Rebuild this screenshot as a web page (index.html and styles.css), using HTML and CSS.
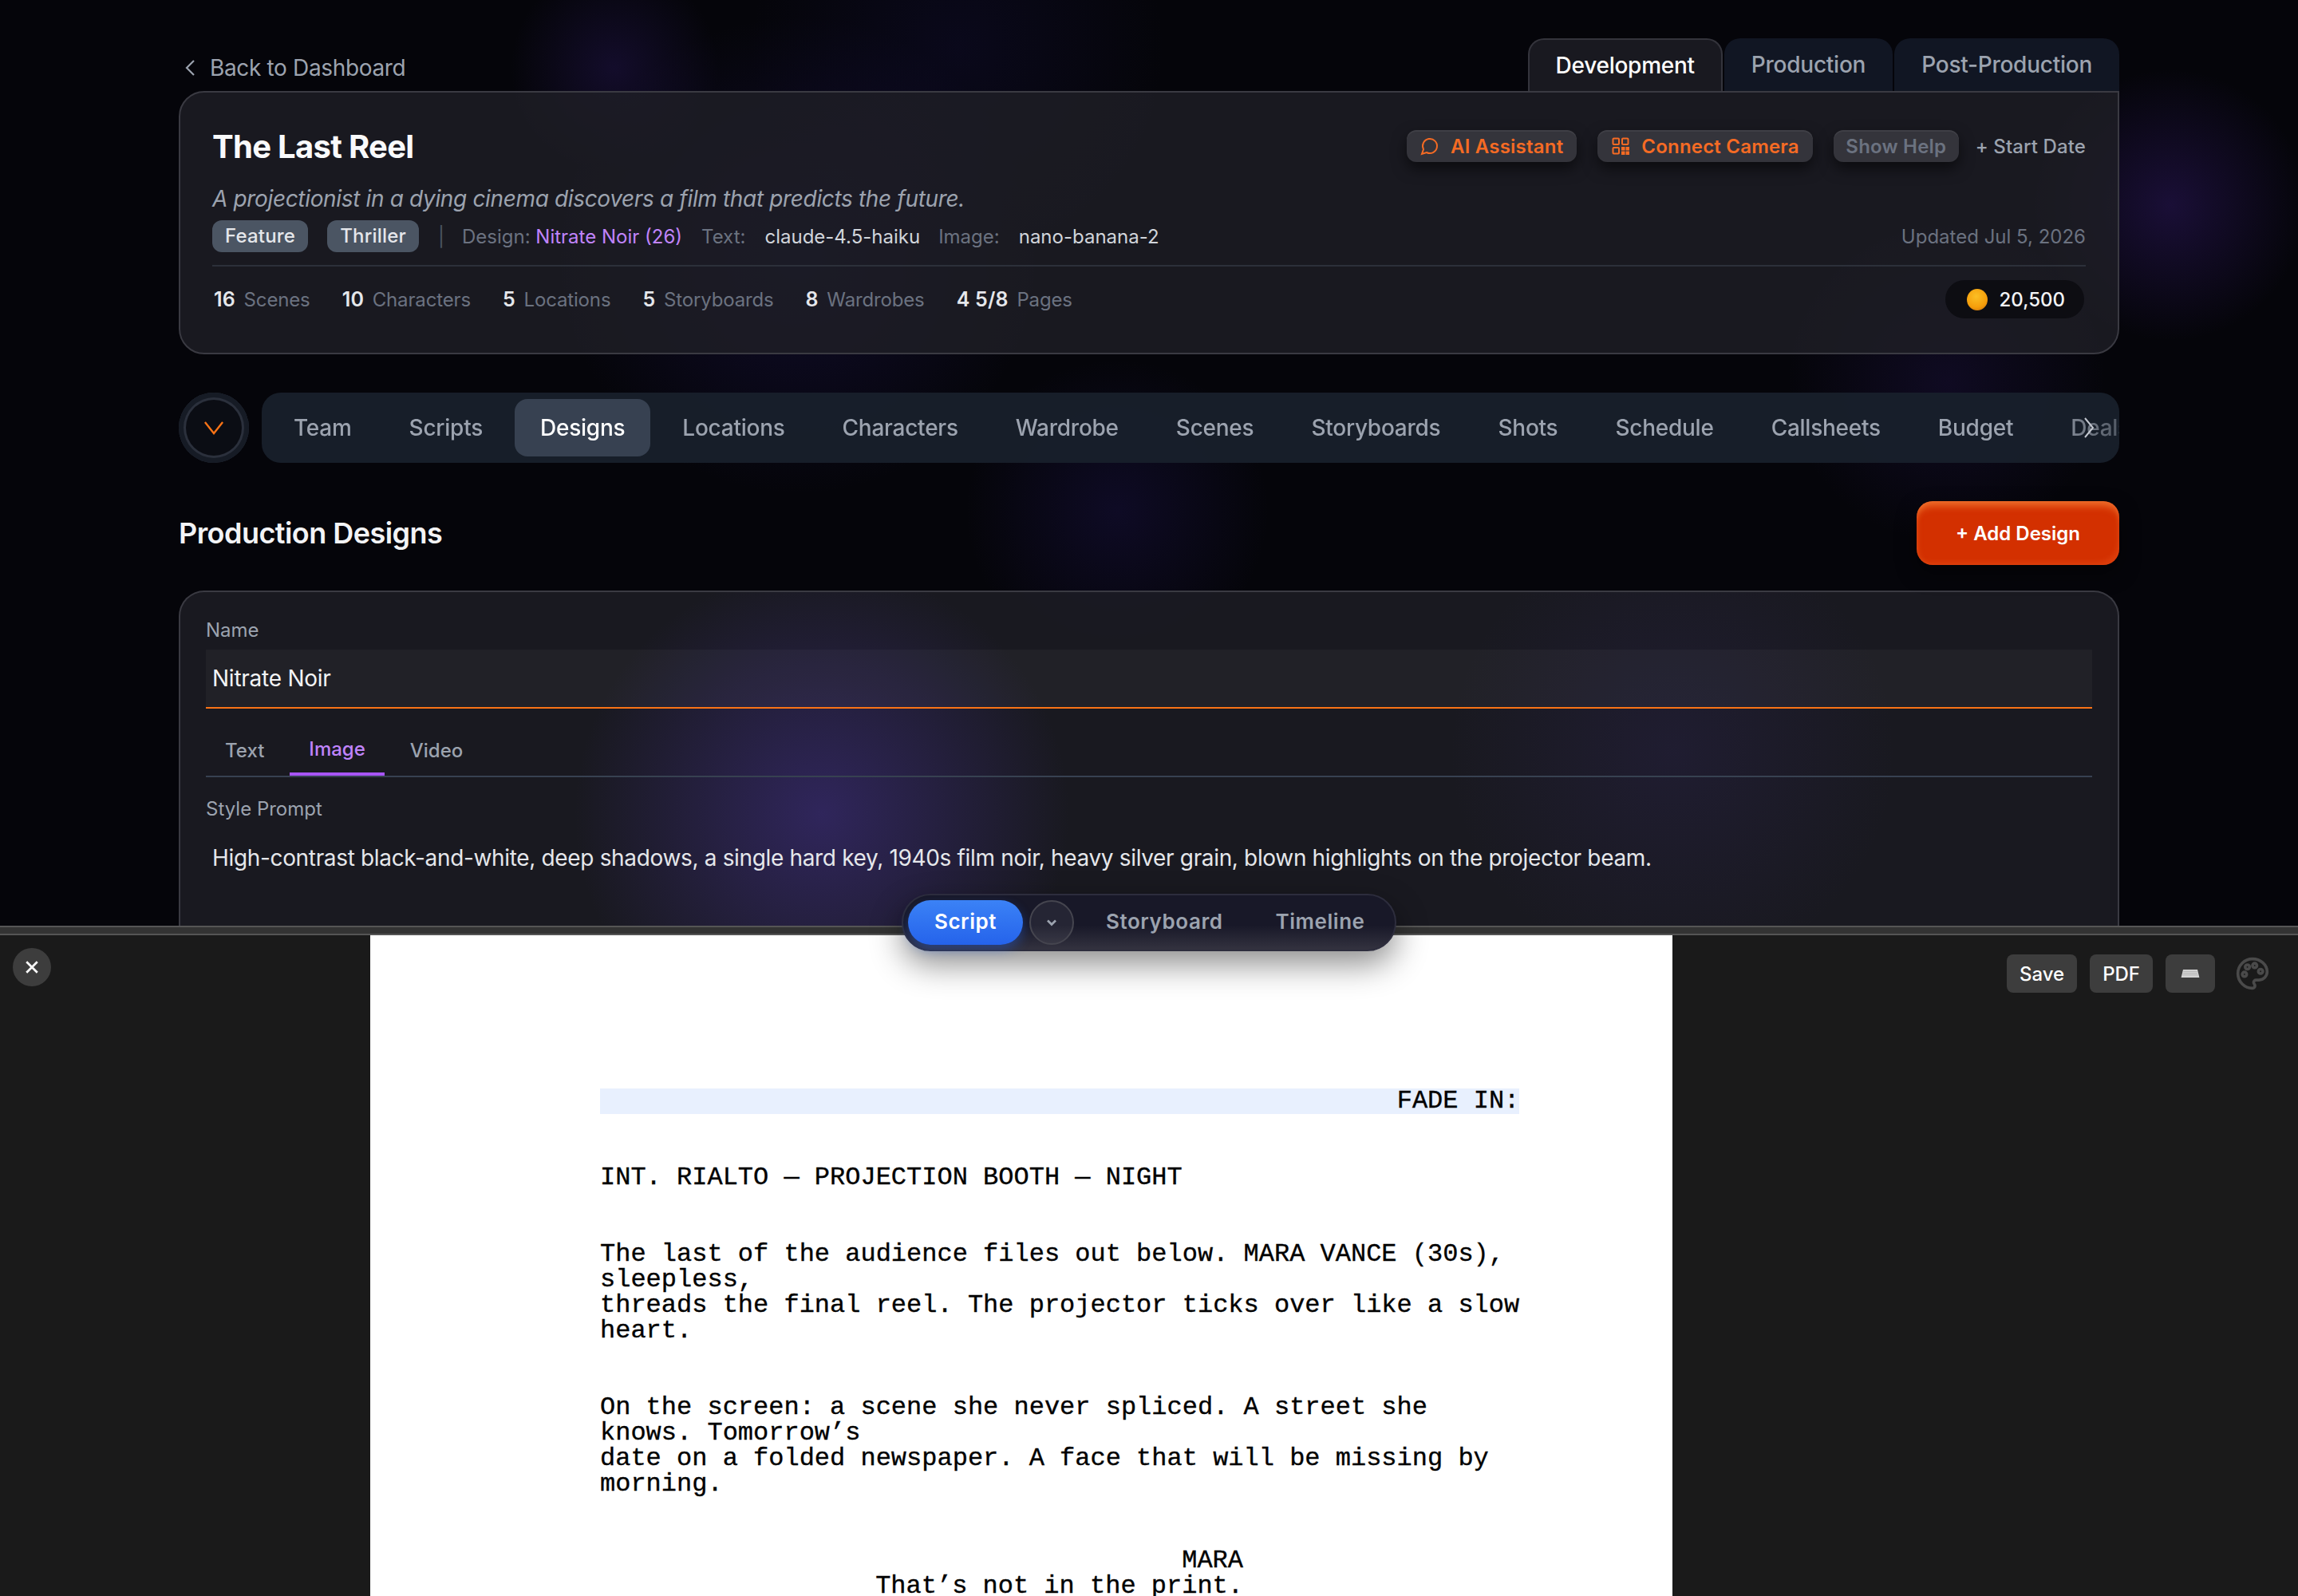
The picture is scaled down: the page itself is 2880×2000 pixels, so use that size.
FILE: index.html
```html
<!DOCTYPE html>
<html lang="en">
<head>
    <meta charset="UTF-8">
    <title>The Last Reel - Production Designs</title>
    <link rel="stylesheet" href="styles.css">
</head>
<body>
    <main class="workspace">
        <div class="top-row">
            <a class="back-link" href="#">
                <svg class="back-icon" viewBox="0 0 16 24"><path d="M13 3 4 12l9 9"/></svg>
                Back to Dashboard
            </a>
            <div class="phase-tabs">
                <button class="phase-tab active">Development</button>
                <button class="phase-tab">Production</button>
                <button class="phase-tab">Post-Production</button>
            </div>
        </div>

        <section class="project-card">
            <div class="title-row">
                <h1>The Last Reel</h1>
                <div class="title-actions">
                    <button class="chip-btn">
                        <svg class="chip-icon" viewBox="0 0 24 24"><path d="M7.9 20A9 9 0 1 0 4 16.1L2 22Z"/></svg>
                        AI Assistant
                    </button>
                    <button class="chip-btn">
                        <svg class="chip-icon" viewBox="0 0 24 24">
                            <rect x="2.5" y="2.5" width="7.5" height="7.5" rx="1"/>
                            <rect x="14" y="2.5" width="7.5" height="7.5" rx="1"/>
                            <rect x="2.5" y="14" width="7.5" height="7.5" rx="1"/>
                            <path class="fill" d="M13 13h4.5v4.5H13zM18.5 13H23v4.5h-4.5zM13 18.5h4.5V23H13zM18.5 18.5H23V23h-4.5z"/>
                        </svg>
                        Connect Camera
                    </button>
                    <button class="chip-btn muted">Show Help</button>
                    <span class="start-date">+ Start Date</span>
                </div>
            </div>
            <p class="logline">A projectionist in a dying cinema discovers a film that predicts the future.</p>
            <div class="meta-row">
                <span class="tag">Feature</span>
                <span class="tag">Thriller</span>
                <span class="meta-sep">|</span>
                <span class="meta-key">Design: <em>Nitrate Noir (26)</em></span>
                <span class="meta-key">Text:</span>
                <span class="meta-val">claude-4.5-haiku</span>
                <span class="meta-key">Image:</span>
                <span class="meta-val">nano-banana-2</span>
                <span class="updated">Updated Jul 5, 2026</span>
            </div>
            <div class="stats-row">
                <span class="stat"><b>16</b> Scenes</span>
                <span class="stat"><b>10</b> Characters</span>
                <span class="stat"><b>5</b> Locations</span>
                <span class="stat"><b>5</b> Storyboards</span>
                <span class="stat"><b>8</b> Wardrobes</span>
                <span class="stat"><b>4 5/8</b> Pages</span>
                <span class="credits"><i class="coin"></i>20,500</span>
            </div>
        </section>

        <div class="nav-row">
            <button class="collapse-btn">
                <svg viewBox="0 0 24 24"><path d="M2.5 6 12 18l9.5-12"/></svg>
            </button>
            <nav class="section-nav">
                <div class="section-list">
                    <a href="#">Team</a>
                    <a href="#">Scripts</a>
                    <a href="#" class="active">Designs</a>
                    <a href="#">Locations</a>
                    <a href="#">Characters</a>
                    <a href="#">Wardrobe</a>
                    <a href="#">Scenes</a>
                    <a href="#">Storyboards</a>
                    <a href="#">Shots</a>
                    <a href="#">Schedule</a>
                    <a href="#">Callsheets</a>
                    <a href="#">Budget</a>
                    <a href="#">Deals</a>
                </div>
                <svg class="nav-more" viewBox="0 0 16 28"><path d="m3 2 10 12L3 26"/></svg>
            </nav>
        </div>

        <div class="section-head">
            <h2>Production Designs</h2>
            <button class="add-btn">+ Add Design</button>
        </div>

        <section class="form-card">
            <label class="field-label">Name</label>
            <div class="name-input">Nitrate Noir</div>
            <div class="mode-tabs">
                <span class="mode-tab">Text</span>
                <span class="mode-tab active">Image</span>
                <span class="mode-tab">Video</span>
            </div>
            <label class="field-label">Style Prompt</label>
            <p class="prompt">High-contrast black-and-white, deep shadows, a single hard key, 1940s film noir, heavy silver grain, blown highlights on the projector beam.</p>
        </section>
    </main>

    <section class="script-panel">
        <div class="resize-bar"></div>
        <div class="view-toggle">
            <button class="view-btn current">Script</button>
            <button class="view-caret">
                <svg viewBox="0 0 12 12"><path d="m3 4.5 3 3 3-3"/></svg>
            </button>
            <button class="view-btn">Storyboard</button>
            <button class="view-btn">Timeline</button>
        </div>
        <div class="panel-body">
            <button class="close-btn">
                <svg viewBox="0 0 12 12"><path d="m1.5 1.5 9 9m0-9-9 9"/></svg>
            </button>
            <article class="page">
                <div class="transition">FADE IN:</div>
                <div class="slug">INT. RIALTO — PROJECTION BOOTH — NIGHT</div>
                <p class="action">The last of the audience files out below. MARA VANCE (30s), sleepless,<br>threads the final reel. The projector ticks over like a slow heart.</p>
                <p class="action">On the screen: a scene she never spliced. A street she knows. Tomorrow’s<br>date on a folded newspaper. A face that will be missing by morning.</p>
                <div class="dialogue">
                    <div>MARA</div>
                    <div>That’s not in the print.</div>
                </div>
            </article>
            <div class="panel-tools">
                <button class="tool-btn">Save</button>
                <button class="tool-btn">PDF</button>
                <button class="tool-btn key-btn">
                    <svg viewBox="0 0 24 12">
                        <path class="key-body" d="M3 1h18l2.4 10H.6z"/>
                        <path class="key-rows" d="M3.5 3.4h17M3 5.6h18M2.5 7.8h19"/>
                    </svg>
                </button>
                <svg class="palette" viewBox="0 0 24 24">
                    <circle cx="13.5" cy="6.5" r="1.5"/>
                    <circle cx="17.5" cy="10.5" r="1.5"/>
                    <circle cx="8.5" cy="7.5" r="1.5"/>
                    <circle cx="6.5" cy="12.5" r="1.5"/>
                    <path d="M12 2C6.5 2 2 6.5 2 12s4.5 10 10 10c.926 0 1.648-.746 1.648-1.688 0-.437-.18-.835-.437-1.125-.29-.289-.438-.652-.438-1.125a1.64 1.64 0 0 1 1.668-1.668h1.996c3.051 0 5.555-2.503 5.555-5.554C21.965 6.012 17.461 2 12 2z"/>
                </svg>
            </div>
        </div>
    </section>
</body>
</html>
```

FILE: styles.css
```css
* {
    box-sizing: border-box;
}
html, body {
    margin: 0;
    height: 2000px;
    overflow: hidden;
}
body {
    position: relative;
    font-family: Inter, "Noto Sans", sans-serif;
    background-color: #06060c;
    display: flex;
    flex-direction: column;
}
button {
    font-family: inherit;
    border: none;
    cursor: pointer;
}

/* top workspace */
.workspace {
    height: 1160px;
    overflow: hidden;
    padding: 48px 224px 0;
    background:
        radial-gradient(circle 130px at 770px 85px, rgba(70, 40, 160, 0.22), transparent),
        radial-gradient(circle 170px at 2720px 257px, rgba(80, 40, 170, 0.28), transparent),
        radial-gradient(circle 190px at 1400px 640px, rgba(60, 40, 170, 0.17), transparent),
        radial-gradient(circle 200px at 2440px 480px, rgba(70, 40, 160, 0.16), transparent),
        radial-gradient(circle 260px at 1200px 60px, rgba(40, 30, 130, 0.14), transparent),
        radial-gradient(circle 300px at 1000px 320px, rgba(60, 40, 170, 0.2), transparent),
        #05050a;
}
.top-row {
    display: flex;
    justify-content: space-between;
    align-items: flex-end;
    height: 66px;
}
.back-link {
    display: flex;
    align-items: center;
    gap: 17px;
    padding: 0 0 12px 6px;
    font-size: 28px;
    letter-spacing: -0.35px;
    color: #9ca3af;
    text-decoration: none;
}
.back-icon {
    width: 16px;
    height: 24px;
    fill: none;
    stroke: #9ca3af;
    stroke-width: 2.2;
}
.phase-tabs {
    display: flex;
    gap: 2px;
}
.phase-tab {
    height: 66px;
    padding: 0 34px;
    font-size: 28px;
    font-weight: 500;
    letter-spacing: -0.25px;
    color: #9ca3af;
    background: #111623;
    border-radius: 20px 20px 0 0;
}
.phase-tab.active {
    padding: 0 33px;
    color: #fff;
    background: #191920;
    border: 2px solid #34343c;
    border-bottom: none;
}

/* project summary card */
.project-card {
    height: 330px;
    padding: 42px 40px 0;
    border: 2px solid #3a3a42;
    border-radius: 32px 0 32px 32px;
    background: rgba(30, 30, 38, 0.82);
}
.title-row {
    display: flex;
    justify-content: space-between;
    align-items: center;
    height: 50px;
}
h1 {
    margin: 0;
    font-size: 40px;
    font-weight: 700;
    letter-spacing: -0.7px;
    color: #f9fafb;
}
.title-actions {
    display: flex;
    align-items: center;
    gap: 26px;
}
.chip-btn {
    display: flex;
    align-items: center;
    gap: 14px;
    height: 40px;
    padding: 0 17px;
    font-size: 24px;
    font-weight: 600;
    letter-spacing: 0.2px;
    color: #f56b24;
    background: #34343b;
    border-radius: 12px;
    box-shadow: 0 8px 18px rgba(0, 0, 0, 0.55), inset 0 2px 0 rgba(255, 255, 255, 0.06);
}
.chip-btn.muted {
    padding: 0 15.5px;
    color: #6b7280;
}
.chip-icon {
    width: 24px;
    height: 24px;
    fill: none;
    stroke: #f56b24;
    stroke-width: 2;
}
.chip-icon .fill {
    fill: #f56b24;
    stroke: none;
}
.start-date {
    margin-left: -5px;
    font-size: 24px;
    font-weight: 500;
    letter-spacing: 0.1px;
    color: #9ca3af;
}
.logline {
    margin: 21px 0 0;
    font-size: 28px;
    font-style: italic;
    letter-spacing: -0.35px;
    line-height: 40px;
    color: #9ca3af;
}
.meta-row {
    display: flex;
    align-items: center;
    height: 40px;
    margin-top: 7px;
    font-size: 24px;
}
.tag {
    height: 40px;
    line-height: 40px;
    padding: 0 16px;
    margin-right: 24px;
    font-weight: 500;
    letter-spacing: 0.2px;
    color: #e5e7eb;
    background: #4b5563;
    border-radius: 12px;
}
.meta-sep {
    margin-right: 22px;
    color: #4b5563;
}
.meta-key {
    color: #6b7280;
    margin-right: 24px;
}
.meta-key em {
    font-style: normal;
    color: #c084fc;
}
.meta-val {
    color: #d1d5db;
    margin-right: 23px;
}
.updated {
    margin-left: auto;
    color: #6b7280;
}
.stats-row {
    display: flex;
    align-items: center;
    gap: 40px;
    height: 84px;
    margin-top: 16px;
    padding-left: 2px;
    border-top: 2px solid #2c303a;
    font-size: 24px;
    letter-spacing: -0.15px;
    color: #6b7280;
}
.stat b {
    margin-right: 4px;
    font-size: 25px;
    font-weight: 600;
    letter-spacing: 0.2px;
    color: #e5e7eb;
}
.credits {
    display: flex;
    align-items: center;
    gap: 15px;
    height: 48px;
    margin-left: auto;
    margin-right: 2px;
    padding: 0 24px 0 27px;
    font-weight: 500;
    letter-spacing: 0;
    color: #f3f4f6;
    background: #0d0d12;
    border-radius: 24px;
}
.coin {
    width: 26px;
    height: 27px;
    border-radius: 50%;
    background: radial-gradient(circle at 45% 35%, #fbbf24, #f59e0b 60%, #c2660a);
}

/* section navigation */
.nav-row {
    display: flex;
    gap: 16px;
    height: 88px;
    margin-top: 48px;
}
.collapse-btn {
    flex: none;
    display: flex;
    align-items: center;
    justify-content: center;
    width: 88px;
    height: 88px;
    padding: 0;
    border-radius: 50%;
    background: #0b0d14;
    box-shadow: inset 0 0 0 6px #161b25, inset 0 0 0 9px #2b303c;
}
.collapse-btn svg {
    width: 28px;
    height: 28px;
    fill: none;
    stroke: #f97316;
    stroke-width: 2;
}
.section-nav {
    position: relative;
    flex: 1;
    min-width: 0;
    height: 88px;
    padding: 8px 0 8px 8px;
    overflow: hidden;
    background: rgba(24, 32, 43, 0.95);
    border-radius: 24px;
}
.section-list {
    display: flex;
    gap: 8px;
    height: 72px;
    -webkit-mask-image: linear-gradient(to right, #000 2220px, rgba(0, 0, 0, 0.45) 2320px);
}
.section-list a {
    flex: none;
    padding: 0 32px;
    line-height: 72px;
    font-size: 28px;
    font-weight: 500;
    letter-spacing: -0.25px;
    color: #9ca3af;
    text-decoration: none;
    border-radius: 16px;
}
.section-list a.active {
    color: #fff;
    background: #374151;
}
.nav-more {
    position: absolute;
    top: 30px;
    right: 30px;
    width: 16px;
    height: 28px;
    fill: none;
    stroke: #c4c8d0;
    stroke-width: 2;
}

.section-head {
    display: flex;
    justify-content: space-between;
    align-items: center;
    height: 80px;
    margin-top: 48px;
}
h2 {
    margin: 0;
    font-size: 36px;
    font-weight: 600;
    letter-spacing: -0.55px;
    color: #f3f4f6;
}
.add-btn {
    height: 80px;
    padding: 0 49px;
    font-size: 24px;
    font-weight: 600;
    color: #fff;
    background: #d33000;
    border-radius: 20px;
    box-shadow:
        inset 0 12px 10px -6px rgba(255, 150, 70, 0.6),
        inset 6px 0 8px -6px rgba(255, 150, 70, 0.3),
        inset -6px -8px 6px -4px rgba(255, 120, 60, 0.2),
        0 10px 24px rgba(0, 0, 0, 0.5);
}

/* design form */
.form-card {
    height: 500px;
    margin-top: 32px;
    padding: 32px 32px 0;
    border: 2px solid #3a3a42;
    border-bottom: none;
    border-radius: 32px 32px 0 0;
    background:
        radial-gradient(circle 310px at 804px 278px, rgba(70, 50, 150, 0.5), transparent),
        radial-gradient(circle 280px at 1870px 200px, rgba(70, 50, 150, 0.14), transparent),
        rgba(30, 30, 38, 0.8);
}
.field-label {
    display: block;
    font-size: 24px;
    line-height: 32px;
    color: #9ca3af;
}
.name-input {
    height: 74px;
    margin-top: 8px;
    padding: 0 8px;
    line-height: 72px;
    font-size: 28px;
    letter-spacing: -0.25px;
    color: #f3f4f6;
    background: rgba(255, 255, 255, 0.035);
    border-bottom: 2px solid #f97316;
}
.mode-tabs {
    display: flex;
    gap: 8px;
    height: 86px;
    margin: 0 0 24px;
    align-items: flex-end;
    border-bottom: 2px solid #374151;
}
.mode-tab {
    padding: 0 24px 10px;
    height: 52px;
    line-height: 42px;
    font-size: 24px;
    font-weight: 500;
    color: #9ca3af;
}
.mode-tab.active {
    color: #c084fc;
    line-height: 38px;
    border-bottom: 4px solid #a855f7;
}
.prompt {
    margin: 24px 0 0;
    padding: 0 8px;
    font-size: 28px;
    letter-spacing: -0.34px;
    line-height: 42px;
    color: #e5e7eb;
}

/* script panel */
.script-panel {
    position: relative;
    flex: 1;
    display: flex;
    flex-direction: column;
    min-height: 0;
    background: #1a1a1a;
}
.resize-bar {
    flex: none;
    height: 12px;
    background: #333;
    border-top: 2px solid #555;
    border-bottom: 2px solid #555;
}
.view-toggle {
    position: absolute;
    top: -40px;
    left: 1130px;
    z-index: 5;
    display: flex;
    align-items: center;
    gap: 8px;
    width: 620px;
    height: 72px;
    padding: 0 6px;
    border: 2px solid #2d2d3d;
    border-radius: 36px;
    background: linear-gradient(to bottom, #181828 55%, #33323f);
    box-shadow: 0 16px 40px rgba(0, 0, 0, 0.45);
}
.view-btn {
    flex: none;
    height: 56px;
    padding: 0 29px 3px;
    font-size: 26px;
    font-weight: 600;
    letter-spacing: 0.55px;
    color: #9ca3af;
    background: none;
}
.view-btn.current {
    width: 144px;
    padding: 0 0 3px;
    color: #fff;
    border-radius: 28px;
    background: linear-gradient(to bottom, #3b82f6, #2563eb);
    box-shadow: 0 6px 14px rgba(37, 99, 235, 0.4);
}
.view-caret {
    display: flex;
    align-items: center;
    justify-content: center;
    flex: none;
    width: 56px;
    height: 56px;
    margin-right: 3px;
    padding: 0;
    border-radius: 50%;
    border: 2px solid #45454f;
    background: rgba(255, 255, 255, 0.06);
}
.view-caret svg {
    width: 20px;
    height: 20px;
    fill: none;
    stroke: #9ca3af;
    stroke-width: 1.6;
}
.panel-body {
    position: relative;
    flex: 1;
    min-height: 0;
    display: flex;
    justify-content: center;
    padding-right: 320px;
    overflow: hidden;
}
.close-btn {
    position: absolute;
    top: 16px;
    left: 16px;
    display: flex;
    align-items: center;
    justify-content: center;
    width: 48px;
    height: 48px;
    padding: 0;
    border-radius: 50%;
    background: #3d3d3d;
}
.close-btn svg {
    width: 18px;
    height: 18px;
    stroke: #fff;
    stroke-width: 1.8;
}
.page {
    width: 1632px;
    height: 1000px;
    padding: 192px 191.7px 0 288px;
    background: #fff;
    font-family: "Liberation Mono", "Courier New", monospace;
    font-size: 32px;
    line-height: 32px;
    color: #000;
    -webkit-text-stroke: 0.35px #000;
}
.transition {
    text-align: right;
    background: #e8f0fe;
}
.slug {
    margin-top: 64px;
}
.action {
    margin: 64px 0 0;
}
.dialogue {
    width: 806px;
    margin-top: 64px;
    text-align: right;
}
.panel-tools {
    position: absolute;
    top: 24px;
    right: 35px;
    display: flex;
    align-items: center;
    gap: 16px;
}
.tool-btn {
    height: 48px;
    padding: 0 16px;
    font-size: 24px;
    font-weight: 500;
    color: #fff;
    background: #3d3d3d;
    border-radius: 8px;
}
.key-btn {
    display: flex;
    align-items: center;
    justify-content: center;
    width: 62px;
    padding: 0;
}
.key-btn svg {
    width: 24px;
    height: 12px;
}
.key-body {
    fill: #d4d4d4;
}
.key-rows {
    fill: none;
    stroke: #a8a8a8;
    stroke-width: 0.7;
}
.palette {
    width: 44px;
    height: 44px;
    margin-left: 9px;
    fill: none;
    stroke: #4a4a4a;
    stroke-width: 2;
}
```
